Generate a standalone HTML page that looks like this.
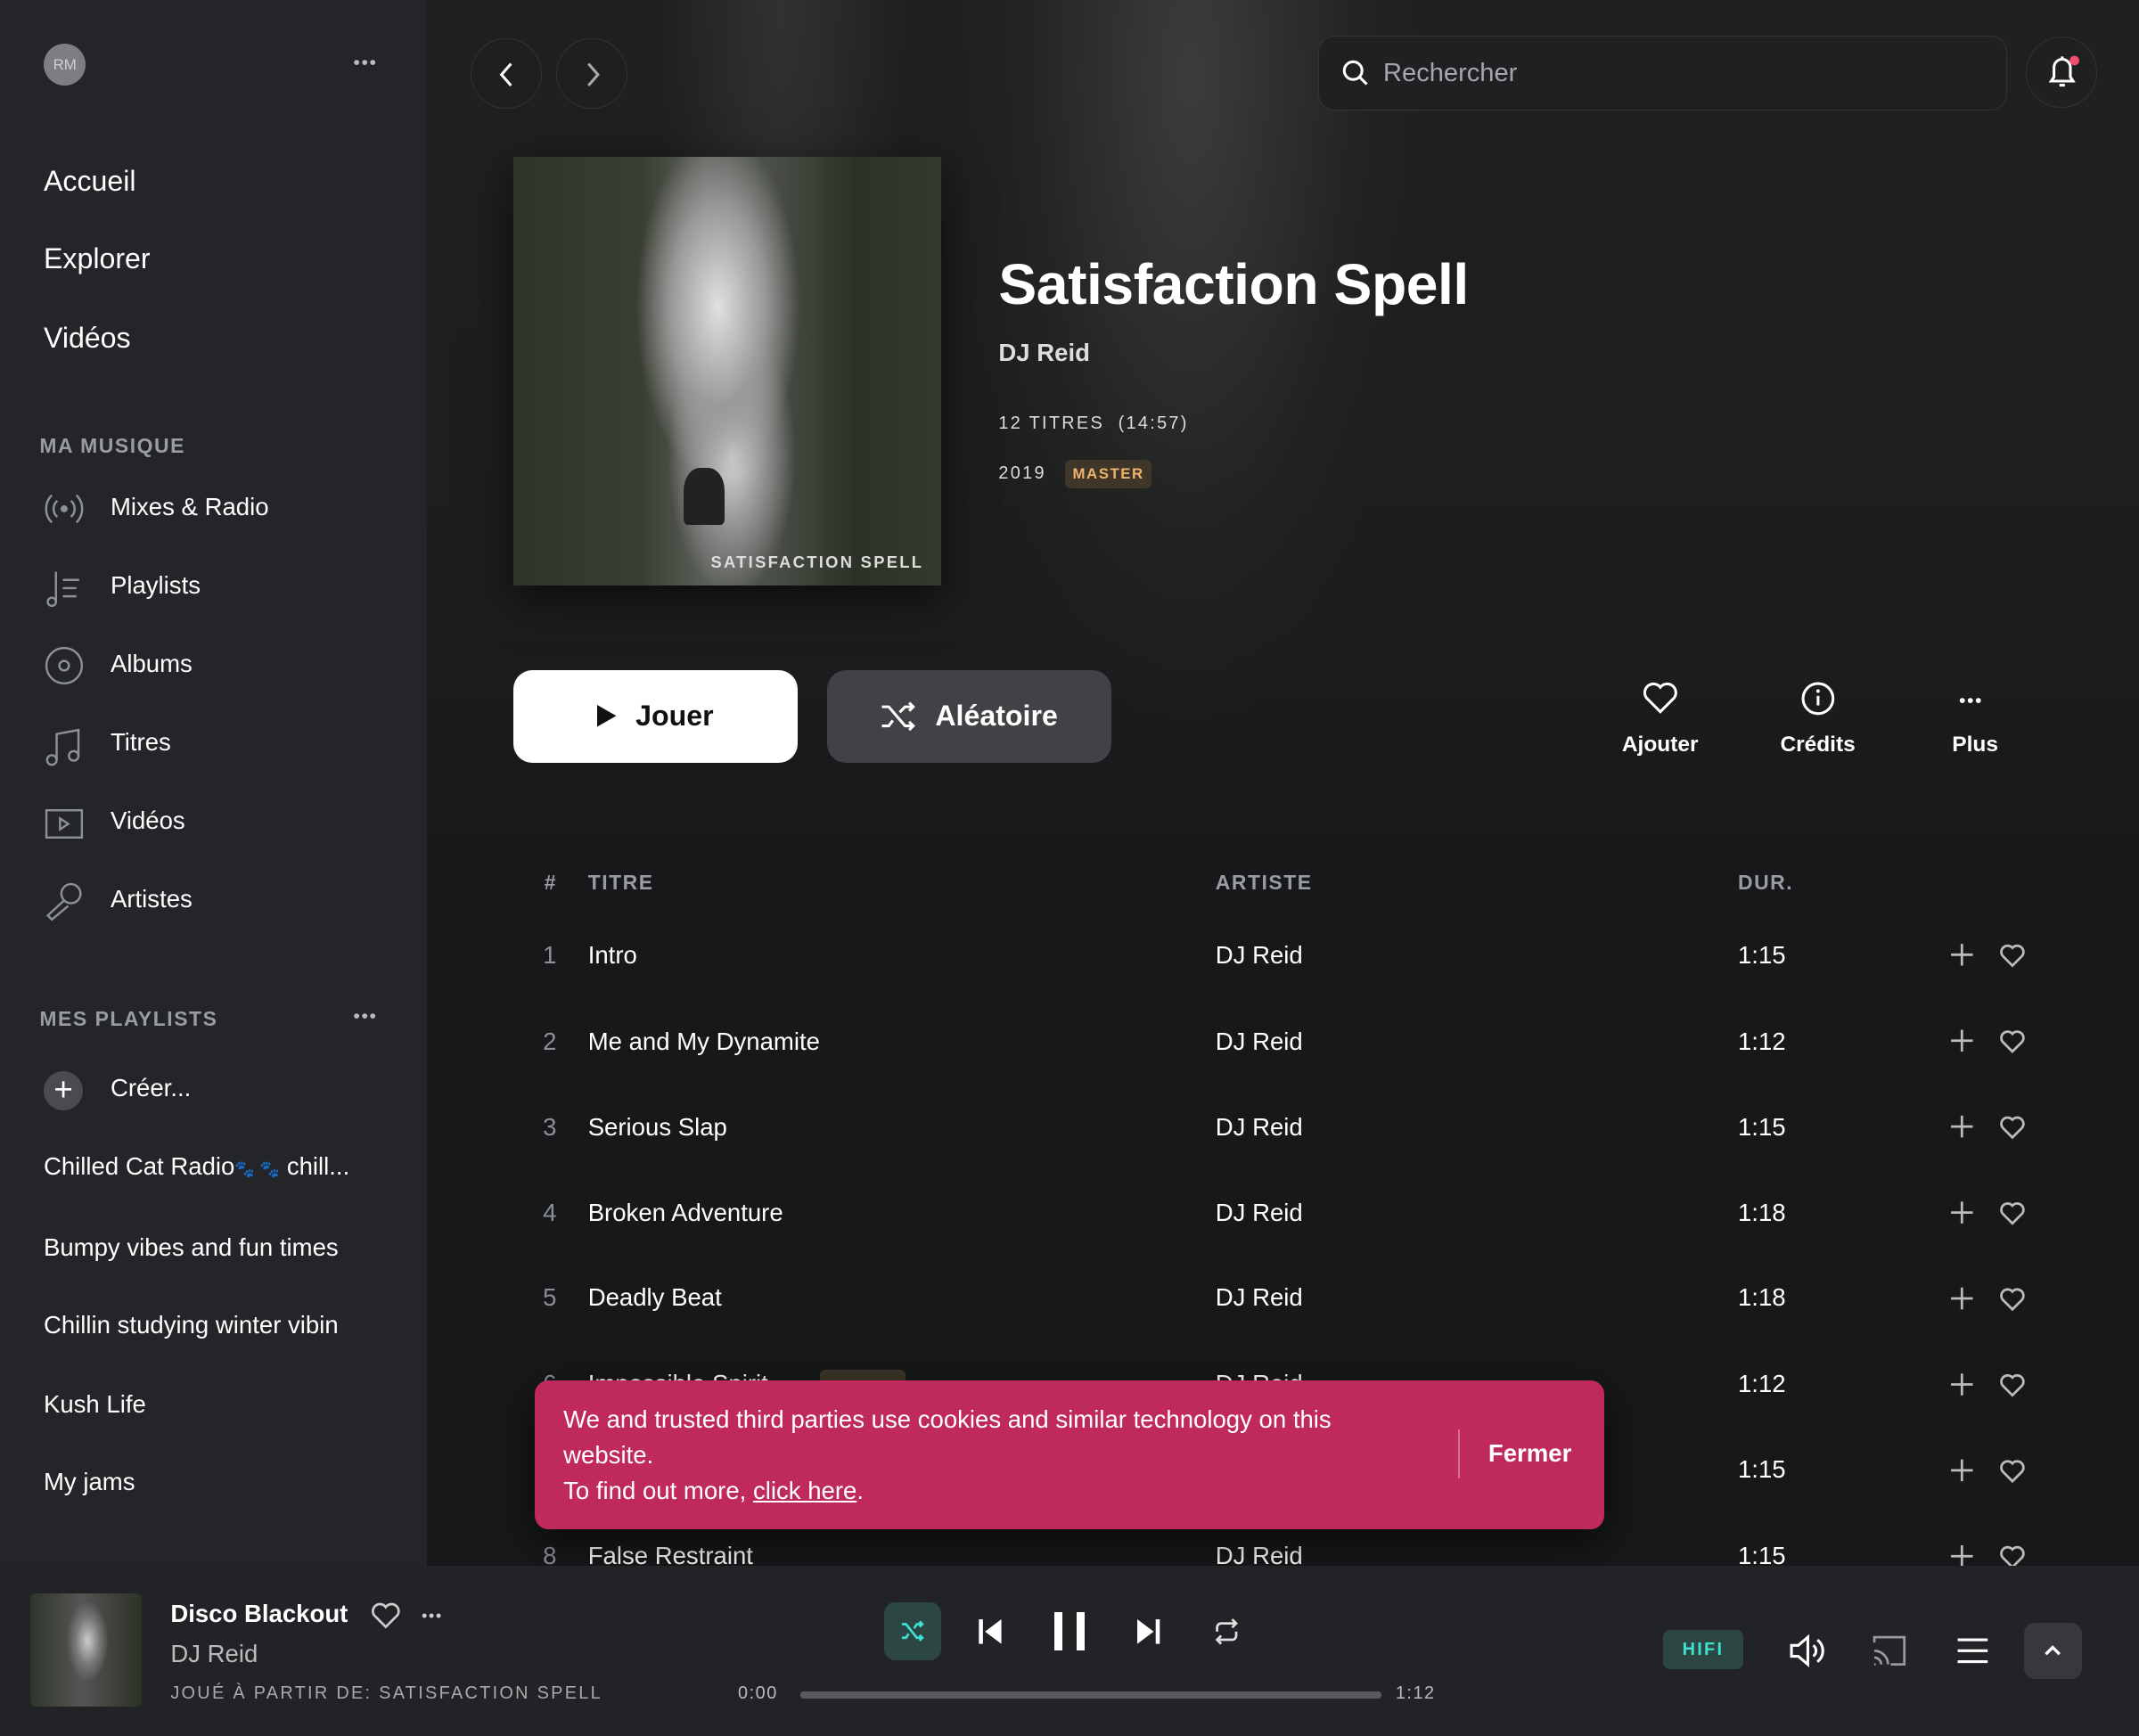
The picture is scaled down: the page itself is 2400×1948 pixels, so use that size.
<!DOCTYPE html>
<html><head><meta charset="utf-8"><style>
*{margin:0;padding:0;box-sizing:border-box}
html,body{width:2400px;height:1948px;overflow:hidden;background:#17181a}
#r{zoom:1.53061;width:1568px;height:1273px;position:relative;font-family:"Liberation Sans",sans-serif;color:#fff;overflow:hidden;background:#17181a}
.a{position:absolute}
.side{left:0;top:0;width:313px;height:1148px;background:#242528}
.nav{left:32px;font-size:21px}
.lbl{left:29px;font-size:15px;color:#9a9ca3;letter-spacing:1px;font-weight:bold}
.it{left:81px;font-size:18px}
.ic{left:32px;width:30px;height:30px;stroke:#8d9096;fill:none;stroke-width:1.6}
.pl{left:32px;font-size:18px}
.hero{left:313px;top:0;width:1255px;height:640px;background:
radial-gradient(ellipse 200px 560px at 560px 60px,rgba(95,95,95,.45),rgba(55,55,55,.18) 60%,transparent 85%),
radial-gradient(ellipse 90px 400px at 260px 0,rgba(90,90,90,.3),transparent),
linear-gradient(#202020,#1c1d1e 70%,#17181a)}
.cov{left:376px;top:115px;width:314px;height:314px;background:
radial-gradient(ellipse 75px 160px at 150px 110px,#e0e0e0,#9a9a9a 45%,transparent 80%),
radial-gradient(ellipse 55px 120px at 160px 220px,#d6d6d6,#888 50%,transparent 85%),
linear-gradient(90deg,#2e3528,#3a3f33 30%,#5a5e58 45%,#4b4f48 60%,#2c3226 80%,#343a2c);box-shadow:0 10px 30px rgba(0,0,0,.6)}
.btn{top:491px;height:68px;width:209px;border-radius:14px;font-size:21px;font-weight:bold;display:flex;align-items:center;justify-content:center;gap:14px}
.th{top:638px;font-size:15px;color:#9a9ca3;letter-spacing:1px;font-weight:bold}
.row{left:0;width:1568px;height:63px;font-size:18px}
.row span{position:absolute;top:0}
.n{left:398px;color:#8d9096}
.t{left:431px}.ar{left:891px}.d{left:1274px}
svg{overflow:visible}
.pb{left:0;top:1148px;width:1568px;height:125px;background:#222326}
</style></head><body><div id="r">
<div class="a hero"></div>
<div class="a side"></div>
<div class="a" style="left:32px;top:32px;width:31px;height:31px;border-radius:50%;background:#7c7e84;font-size:11px;color:#d0d0d0;display:flex;align-items:center;justify-content:center">RM</div>
<div class="a" style="left:259px;top:38px;font-size:14px;color:#bbb;letter-spacing:1px">•••</div>
<div class="a nav" style="top:121px">Accueil</div>
<div class="a nav" style="top:178px">Explorer</div>
<div class="a nav" style="top:236px">Vidéos</div>
<div class="a lbl" style="top:318px">MA MUSIQUE</div>
<svg class="a ic" style="top:358px" viewBox="0 0 30 30"><circle cx="15" cy="15" r="1.8" fill="#8d9096"/><path d="M10 9a8 8 0 0 0 0 12M20 9a8 8 0 0 1 0 12M6 5a14 14 0 0 0 0 20M24 5a14 14 0 0 1 0 20"/></svg>
<div class="a it" style="top:361px">Mixes &amp; Radio</div>
<svg class="a ic" style="top:416px" viewBox="0 0 30 30"><circle cx="6" cy="25" r="3"/><path d="M9 25V3M14 9h12M14 15h10M14 21h10"/></svg>
<div class="a it" style="top:419px">Playlists</div>
<svg class="a ic" style="top:473px" viewBox="0 0 30 30"><circle cx="15" cy="15" r="13"/><circle cx="15" cy="15" r="3.5"/></svg>
<div class="a it" style="top:476px">Albums</div>
<svg class="a ic" style="top:531px" viewBox="0 0 30 30"><circle cx="6" cy="26" r="3.5"/><circle cx="22" cy="23" r="3.5"/><path d="M9.5 26V7l16-3v19"/></svg>
<div class="a it" style="top:534px">Titres</div>
<svg class="a ic" style="top:588px" viewBox="0 0 30 30"><rect x="2" y="6" width="26" height="20"/><path d="M12 12v8l6-4z"/></svg>
<div class="a it" style="top:591px">Vidéos</div>
<svg class="a ic" style="top:646px" viewBox="0 0 30 30"><circle cx="20" cy="9" r="7"/><path d="M15 14L3 25l3 3 12-10"/></svg>
<div class="a it" style="top:649px">Artistes</div>
<div class="a lbl" style="top:738px">MES PLAYLISTS</div>
<div class="a" style="left:259px;top:737px;font-size:14px;color:#bbb;letter-spacing:1px">•••</div>
<div class="a" style="left:32px;top:785px;width:29px;height:29px;border-radius:50%;background:#4a4b50;text-align:center;font-size:24px;line-height:27px">+</div>
<div class="a it" style="top:787px">Créer...</div>
<div class="a pl" style="top:845px">Chilled Cat Radio<span style="color:#666;font-size:12px">🐾 🐾</span> chill...</div>
<div class="a pl" style="top:904px">Bumpy vibes and fun times</div>
<div class="a pl" style="top:961px">Chillin studying winter vibin</div>
<div class="a pl" style="top:1019px">Kush Life</div>
<div class="a pl" style="top:1076px">My jams</div>

<div class="a" style="left:345px;top:28px;width:52px;height:52px;border-radius:50%;background:rgba(30,31,33,.8);border:1px solid #333"><svg width="52" height="52" viewBox="0 0 52 52"><path d="M29 18l-7 8 7 8" stroke="#fff" stroke-width="2" fill="none"/></svg></div>
<div class="a" style="left:408px;top:28px;width:52px;height:52px;border-radius:50%;background:rgba(30,31,33,.8);border:1px solid #333"><svg width="52" height="52" viewBox="0 0 52 52"><path d="M23 18l7 8-7 8" stroke="#aaa" stroke-width="2" fill="none"/></svg></div>
<div class="a" style="left:966px;top:26px;width:505px;height:55px;border-radius:12px;background:#1f2022;border:1px solid #333"></div>
<svg class="a" style="left:984px;top:44px" width="20" height="20" viewBox="0 0 20 20"><circle cx="8" cy="8" r="6.5" stroke="#fff" stroke-width="2" fill="none"/><path d="M13 13l5 5" stroke="#fff" stroke-width="2"/></svg>
<div class="a" style="left:1014px;top:43px;font-size:19px;color:#a5a7ac">Rechercher</div>
<div class="a" style="left:1485px;top:27px;width:52px;height:52px;border-radius:50%;background:#1f2022;border:1px solid #333"><svg width="52" height="52" viewBox="0 0 52 52"><path d="M18 32h16l-2-3v-7a6 6 0 0 0-12 0v7zM24 35h4M26 14v2" stroke="#fff" stroke-width="2" fill="none"/><circle cx="35" cy="17" r="3.5" fill="#f0506e"/></svg></div>

<div class="a cov"><div class="a" style="left:145px;top:290px;font-size:12px;letter-spacing:1.5px;color:#ddd;font-weight:bold">SATISFACTION SPELL</div><div class="a" style="left:125px;top:228px;width:30px;height:42px;background:#222;border-radius:40% 40% 10% 10%"></div></div>
<div class="a" style="left:732px;top:184px;font-size:42px;font-weight:bold;letter-spacing:-0.3px">Satisfaction Spell</div>
<div class="a" style="left:732px;top:248px;font-size:18px;color:#ddd;font-weight:bold">DJ Reid</div>
<div class="a" style="left:732px;top:303px;font-size:13px;letter-spacing:1.5px;color:#ddd">12 TITRES &nbsp;(14:57)</div>
<div class="a" style="left:732px;top:340px;font-size:13px;letter-spacing:1.5px;color:#ddd">2019</div>
<div class="a" style="left:781px;top:337px;width:63px;height:21px;border-radius:4px;background:#3d3629;color:#f0b36d;font-size:11px;font-weight:bold;letter-spacing:1px;text-align:center;line-height:21px">MASTER</div>

<div class="a btn" style="left:376px;background:#fff;color:#111"><svg width="14" height="16" viewBox="0 0 14 16"><path d="M0 0l14 8-14 8z" fill="#111"/></svg>Jouer</div>
<div class="a btn" style="left:606px;background:#414246;color:#fff"><svg width="26" height="22" viewBox="0 0 26 22" fill="none" stroke="#fff" stroke-width="2"><path d="M1 4h5l12 14h6M1 18h5l3-4M14 8l4-4h6M21 1l3 3-3 3M21 15l3 3-3 3"/></svg>Aléatoire</div>
<svg class="a" style="left:1204px;top:500px" width="26" height="24" viewBox="0 0 26 24"><path d="M13 22L3 12a6 6 0 0 1 10-8 6 6 0 0 1 10 8z" stroke="#fff" stroke-width="2" fill="none"/></svg>
<div class="a" style="left:1189px;top:537px;font-size:16px;font-weight:bold">Ajouter</div>
<svg class="a" style="left:1320px;top:499px" width="26" height="26" viewBox="0 0 26 26"><circle cx="13" cy="13" r="11" stroke="#fff" stroke-width="2" fill="none"/><path d="M13 11v7" stroke="#fff" stroke-width="2"/><circle cx="13" cy="7.5" r="1.3" fill="#fff"/></svg>
<div class="a" style="left:1305px;top:537px;font-size:16px;font-weight:bold">Crédits</div>
<div class="a" style="left:1436px;top:506px;font-size:14px;letter-spacing:1px">•••</div>
<div class="a" style="left:1431px;top:537px;font-size:16px;font-weight:bold">Plus</div>

<div class="a th" style="left:399px">#</div>
<div class="a th" style="left:431px">TITRE</div>
<div class="a th" style="left:891px">ARTISTE</div>
<div class="a th" style="left:1274px">DUR.</div>

<div class="a row" style="top:690px"><span class="n">1</span><span class="t">Intro</span><span class="ar">DJ Reid</span><span class="d">1:15</span></div>
<div class="a row" style="top:753px"><span class="n">2</span><span class="t">Me and My Dynamite</span><span class="ar">DJ Reid</span><span class="d">1:12</span></div>
<div class="a row" style="top:816px"><span class="n">3</span><span class="t">Serious Slap</span><span class="ar">DJ Reid</span><span class="d">1:15</span></div>
<div class="a row" style="top:879px"><span class="n">4</span><span class="t">Broken Adventure</span><span class="ar">DJ Reid</span><span class="d">1:18</span></div>
<div class="a row" style="top:941px"><span class="n">5</span><span class="t">Deadly Beat</span><span class="ar">DJ Reid</span><span class="d">1:18</span></div>
<div class="a row" style="top:1004px"><span class="n">6</span><span class="t">Impossible Spirit</span><span class="ar">DJ Reid</span><span class="d">1:12</span><span style="left:601px;top:0;width:63px;height:21px;border-radius:4px;background:#3d3629"></span></div>
<div class="a row" style="top:1067px"><span class="n">7</span><span class="t">Lost</span><span class="ar">DJ Reid</span><span class="d">1:15</span></div>
<div class="a row" style="top:1130px"><span class="n">8</span><span class="t">False Restraint</span><span class="ar">DJ Reid</span><span class="d">1:15</span></div>
<svg class="a" style="left:1428px;top:690px" width="70" height="460" viewBox="0 0 70 460" fill="none" stroke="#bbb" stroke-width="1.8">
<g id="pp"><path d="M10 2v16M2 10h16"/><path d="M47 18l-7-7a4.5 4.5 0 0 1 7-6 4.5 4.5 0 0 1 7 6z"/></g>
<use href="#pp" y="63"/><use href="#pp" y="126"/><use href="#pp" y="189"/><use href="#pp" y="252"/><use href="#pp" y="315"/><use href="#pp" y="378"/><use href="#pp" y="441"/></svg>

<div class="a" style="left:392px;top:1012px;width:784px;height:109px;background:#bf295e;border-radius:10px;box-shadow:0 10px 30px rgba(0,0,0,.6)"></div>
<div class="a" style="left:413px;top:1028px;font-size:18px;line-height:26px;width:610px">We and trusted third parties use cookies and similar technology on this website.<br>To find out more, <u>click here</u>.</div>
<div class="a" style="left:1069px;top:1048px;width:1px;height:36px;background:#d96d93"></div>
<div class="a" style="left:1091px;top:1055px;font-size:18px;font-weight:bold">Fermer</div>

<div class="a pb"></div>
<div class="a" style="left:22px;top:1168px;width:82px;height:83px;border-radius:4px;background:radial-gradient(ellipse 18px 35px at 42px 35px,#ccc,#777 50%,transparent 85%),linear-gradient(90deg,#2e3528,#555 45%,#2c3226)"></div>
<div class="a" style="left:125px;top:1173px;font-size:18px;font-weight:bold">Disco Blackout</div>
<svg class="a" style="left:272px;top:1175px" width="22" height="20" viewBox="0 0 22 20"><path d="M11 18L2.5 9.5a5 5 0 0 1 8.5-6 5 5 0 0 1 8.5 6z" stroke="#ccc" stroke-width="1.8" fill="none"/></svg>
<div class="a" style="left:309px;top:1177px;font-size:12px;color:#ccc;letter-spacing:1px">•••</div>
<div class="a" style="left:125px;top:1202px;font-size:18px;color:#bbb">DJ Reid</div>
<div class="a" style="left:125px;top:1234px;font-size:13px;color:#aaa;letter-spacing:1.5px">JOUÉ À PARTIR DE: SATISFACTION SPELL</div>
<div class="a" style="left:648px;top:1175px;width:42px;height:42px;border-radius:8px;background:#2c4644"><svg width="42" height="42" viewBox="0 0 42 42" fill="none" stroke="#3ee0cf" stroke-width="1.8"><path d="M13 16h3l8 10h4M13 26h3l2-3M22 19l2-3h4M26 14l2 2-2 2M26 24l2 2-2 2"/></svg></div>
<svg class="a" style="left:716px;top:1185px" width="20" height="22" viewBox="0 0 20 22"><path d="M3 2v18" stroke="#fff" stroke-width="3"/><path d="M18 2L6 11l12 9z" fill="#fff"/></svg>
<div class="a" style="left:773px;top:1182px;width:6px;height:28px;background:#fff"></div>
<div class="a" style="left:789px;top:1182px;width:6px;height:28px;background:#fff"></div>
<svg class="a" style="left:832px;top:1185px" width="20" height="22" viewBox="0 0 20 22"><path d="M17 2v18" stroke="#fff" stroke-width="3"/><path d="M2 2l12 9-12 9z" fill="#fff"/></svg>
<svg class="a" style="left:889px;top:1185px" width="20" height="22" viewBox="0 0 20 22" fill="none" stroke="#ddd" stroke-width="1.8"><path d="M3 11V8a3 3 0 0 1 3-3h11M14 2l3 3-3 3M17 11v3a3 3 0 0 1-3 3H3M6 14l-3 3 3 3"/></svg>
<div class="a" style="left:541px;top:1234px;font-size:13px;color:#bbb;letter-spacing:1px">0:00</div>
<div class="a" style="left:587px;top:1240px;width:426px;height:5px;border-radius:3px;background:#5a5b5f"></div>
<div class="a" style="left:1023px;top:1234px;font-size:13px;color:#bbb;letter-spacing:1px">1:12</div>
<div class="a" style="left:1219px;top:1195px;width:59px;height:29px;border-radius:5px;background:#2c4644;color:#3ee0cf;font-size:13px;font-weight:bold;letter-spacing:1.5px;text-align:center;line-height:29px">HIFI</div>
<svg class="a" style="left:1311px;top:1196px" width="28" height="28" viewBox="0 0 28 28" fill="none" stroke="#fff" stroke-width="2"><path d="M2 10h5l7-6v20l-7-6H2zM18 10a5 5 0 0 1 0 8M21 6a10 10 0 0 1 0 16"/></svg>
<svg class="a" style="left:1372px;top:1198px" width="26" height="24" viewBox="0 0 26 24" fill="none" stroke="#999" stroke-width="1.8"><path d="M2 6V2h22v20H14M2 12a10 10 0 0 1 10 10M2 17a5 5 0 0 1 5 5M2 22h1"/></svg>
<svg class="a" style="left:1434px;top:1200px" width="24" height="20" viewBox="0 0 24 20" stroke="#fff" stroke-width="2"><path d="M1 2h22M1 10h22M1 18h22"/></svg>
<div class="a" style="left:1484px;top:1190px;width:42px;height:41px;border-radius:8px;background:#37383c"><svg width="42" height="41" viewBox="0 0 42 41"><path d="M16 23l5-5 5 5" stroke="#fff" stroke-width="2.2" fill="none"/></svg></div>
</div></body></html>
